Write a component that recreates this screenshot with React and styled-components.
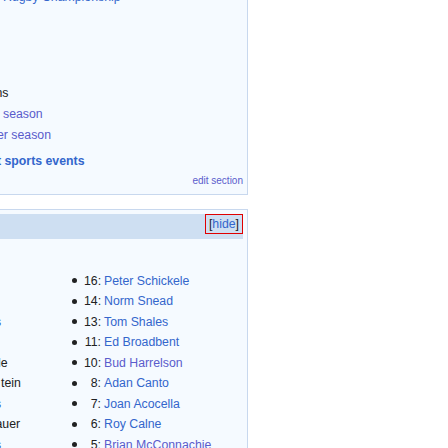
import React from 'react';
import styled, { createGlobalStyle } from 'styled-components';

const GlobalStyle = createGlobalStyle`
  html, body { margin: 0; padding: 0; background: #fff; overflow: hidden; }
  body {
    font-family: "Liberation Sans", Arial, sans-serif;
    font-size: 12.3px;
    color: #202122;
  }
`;

const Page = styled.div`
  width: 448px;
  height: 448px;
  overflow: hidden;
  background: #fff;
`;

const Panel = styled.section`
  width: 248px;
  box-sizing: border-box;
  background: #f5faff;
  border: 1px solid #c8d8ee;
  border-left: none;
  margin-top: ${p => p.$offset}px;
  padding: ${p => p.$pad};
`;

const Line = styled.div`
  height: ${p => p.$h || 21}px;
  line-height: ${p => p.$h || 21}px;
  white-space: nowrap;
  padding-left: ${p => p.$indent || 0}px;
  margin-top: ${p => p.$gap || 0}px;
  font-weight: ${p => (p.$bold ? 700 : 400)};
`;

const Clip = styled.span`
  margin-left: -${p => p.$cut || 0}px;
`;

const Link = styled.a`
  color: ${p => (p.$visited ? '#5a5ccc' : '#3366cc')};
  text-decoration: none;
`;

const EditLine = styled.div`
  margin-top: 2.5px;
  font-size: 10px;
  line-height: 14px;
  text-align: right;
  white-space: nowrap;
`;

const TitleBar = styled.div`
  height: 25px;
  background: #cedff2;
  display: flex;
  justify-content: flex-end;
  align-items: flex-start;
`;

const HideToggle = styled.span`
  box-sizing: border-box;
  height: 20px;
  line-height: 18px;
  padding: 0 3px;
  border: 1px solid #e00000;
  color: #202122;
`;

const ListArea = styled.div`
  display: flex;
  margin-top: 31.5px;
`;

const LeftColumn = styled.ul`
  list-style: none;
  margin: 0;
  padding: 0;
  width: 72px;
  flex: none;
`;

const LeftItem = styled.li`
  height: 20.5px;
  line-height: 20.5px;
  white-space: nowrap;
  padding-left: ${p => p.$indent || 0}px;
`;

const RightColumn = styled.ul`
  list-style: none;
  margin: 0;
  padding: 0;
`;

const Item = styled.li`
  display: flex;
  align-items: center;
  height: 20.5px;
  line-height: 20.5px;
  white-space: nowrap;
`;

const Bullet = styled.span`
  width: 5px;
  height: 5px;
  border-radius: 50%;
  background: #202122;
  flex: none;
`;

const Num = styled.span`
  width: 17px;
  margin-left: 7px;
  text-align: right;
  flex: none;
`;

const Name = styled(Link)`
  margin-left: 3px;
`;

const leftItems = [
  null,
  null,
  { text: 's', cut: 5, link: true },
  null,
  { text: 'le', cut: 2 },
  { text: 'tein', indent: 1 },
  { text: 's', cut: 5, link: true },
  { text: 'auer', cut: 4.5 },
  { text: 's', cut: 5, link: true },
];

const people = [
  ['16', 'Peter Schickele'],
  ['14', 'Norm Snead'],
  ['13', 'Tom Shales'],
  ['11', 'Ed Broadbent'],
  ['10', 'Bud Harrelson', true],
  ['8', 'Adan Canto'],
  ['7', 'Joan Acocella'],
  ['6', 'Roy Calne'],
  ['5', 'Brian McConnachie', true],
];

export default function App() {
  return (
    <Page>
      <GlobalStyle />
      <Panel $offset={-15} $pad="0 4px 6px 0">
        <Line $h={22} $indent={3}>
          <Link>Rugby Championship</Link>
        </Line>
        <Line $gap={74.5}>
          <Clip $cut={4.5}>ns</Clip>
        </Line>
        <Line $indent={3}>
          <Link $visited>season</Link>
        </Line>
        <Line>
          <Clip $cut={3}>
            <Link $visited>er season</Link>
          </Clip>
        </Line>
        <Line $gap={5} $bold>
          <Clip $cut={3}>
            <Link>t sports events</Link>
          </Clip>
        </Line>
        <EditLine>
          <Link $visited>edit section</Link>
        </EditLine>
      </Panel>
      <Panel $offset={14} $pad="4px 4px 0 0">
        <TitleBar>
          <HideToggle>
            [<Link>hide</Link>]
          </HideToggle>
        </TitleBar>
        <ListArea>
          <LeftColumn>
            {leftItems.map((it, i) => (
              <LeftItem key={i} $indent={it && it.indent}>
                {it &&
                  (it.link ? (
                    <Clip $cut={it.cut}>
                      <Link>{it.text}</Link>
                    </Clip>
                  ) : (
                    <Clip $cut={it.cut}>{it.text}</Clip>
                  ))}
              </LeftItem>
            ))}
          </LeftColumn>
          <RightColumn>
            {people.map(([n, name, visited]) => (
              <Item key={name}>
                <Bullet />
                <Num>{n}:</Num>
                <Name $visited={visited}>{name}</Name>
              </Item>
            ))}
          </RightColumn>
        </ListArea>
      </Panel>
    </Page>
  );
}
